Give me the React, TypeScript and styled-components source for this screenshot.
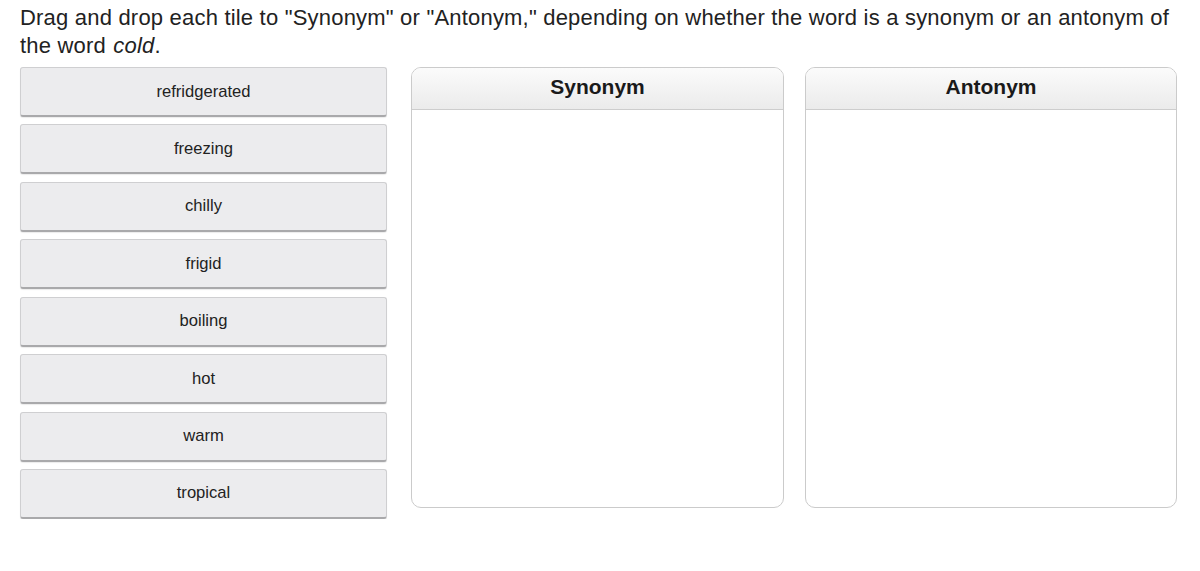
import React from "react";
import styled, { createGlobalStyle } from "styled-components";

const Global = createGlobalStyle`
  html, body { margin: 0; padding: 0; background: #fff; }
  body { font-family: "Liberation Sans", Arial, sans-serif; color: #222; }
`;

const Page = styled.div`
  padding: 4px 20px 0 20px;
  width: 1200px;
  box-sizing: border-box;
`;

const Prompt = styled.p`
  margin: 0;
  font-size: 22px;
  letter-spacing: 0.2px;
  line-height: 27.5px;
  color: #222;
  max-width: 1172px;
`;

const Em = styled.i`
  font-style: italic;
  padding-left: 1px;
`;

const Board = styled.div`
  display: flex;
  align-items: flex-start;
  margin-top: 8px;
`;

const TileColumn = styled.div`
  display: flex;
  flex-direction: column;
  gap: 7.43px;
  width: 367px;
  flex-shrink: 0;
`;

const Tile = styled.div`
  box-sizing: border-box;
  height: 50px;
  display: flex;
  align-items: center;
  justify-content: center;
  background: #ececee;
  border: 1px solid #cfcfd1;
  border-bottom: 2px solid #a9a9ab;
  border-radius: 3px;
  font-size: 16.6px;
  color: #222;
  box-shadow: 0 1px 1px rgba(0, 0, 0, 0.08);
`;

const Zone = styled.div<{ $ml: number; $w: number }>`
  box-sizing: border-box;
  margin-left: ${(p) => p.$ml}px;
  width: ${(p) => p.$w}px;
  height: 441px;
  border: 1px solid #cbcbcb;
  border-radius: 10px;
  overflow: hidden;
  display: flex;
  flex-direction: column;
  background: #fff;
`;

const ZoneHeader = styled.div`
  height: 42px;
  box-sizing: border-box;
  border-bottom: 1px solid #cdcdcd;
  background: linear-gradient(#fbfbfb, #ebebeb);
  display: flex;
  justify-content: center;
  padding-top: 7px;
  font-weight: bold;
  font-size: 21px;
  color: #1a1a1a;
`;

const words = [
  "refridgerated",
  "freezing",
  "chilly",
  "frigid",
  "boiling",
  "hot",
  "warm",
  "tropical",
];

export default function App() {
  return (
    <>
      <Global />
      <Page>
        <Prompt>
          Drag and drop each tile to "Synonym" or "Antonym," depending on whether the word is a
          synonym or an antonym of the word <Em>cold</Em>.
        </Prompt>
        <Board>
          <TileColumn>
            {words.map((w) => (
              <Tile key={w}>{w}</Tile>
            ))}
          </TileColumn>
          <Zone $ml={24} $w={373}>
            <ZoneHeader>Synonym</ZoneHeader>
          </Zone>
          <Zone $ml={21} $w={372}>
            <ZoneHeader>Antonym</ZoneHeader>
          </Zone>
        </Board>
      </Page>
    </>
  );
}
